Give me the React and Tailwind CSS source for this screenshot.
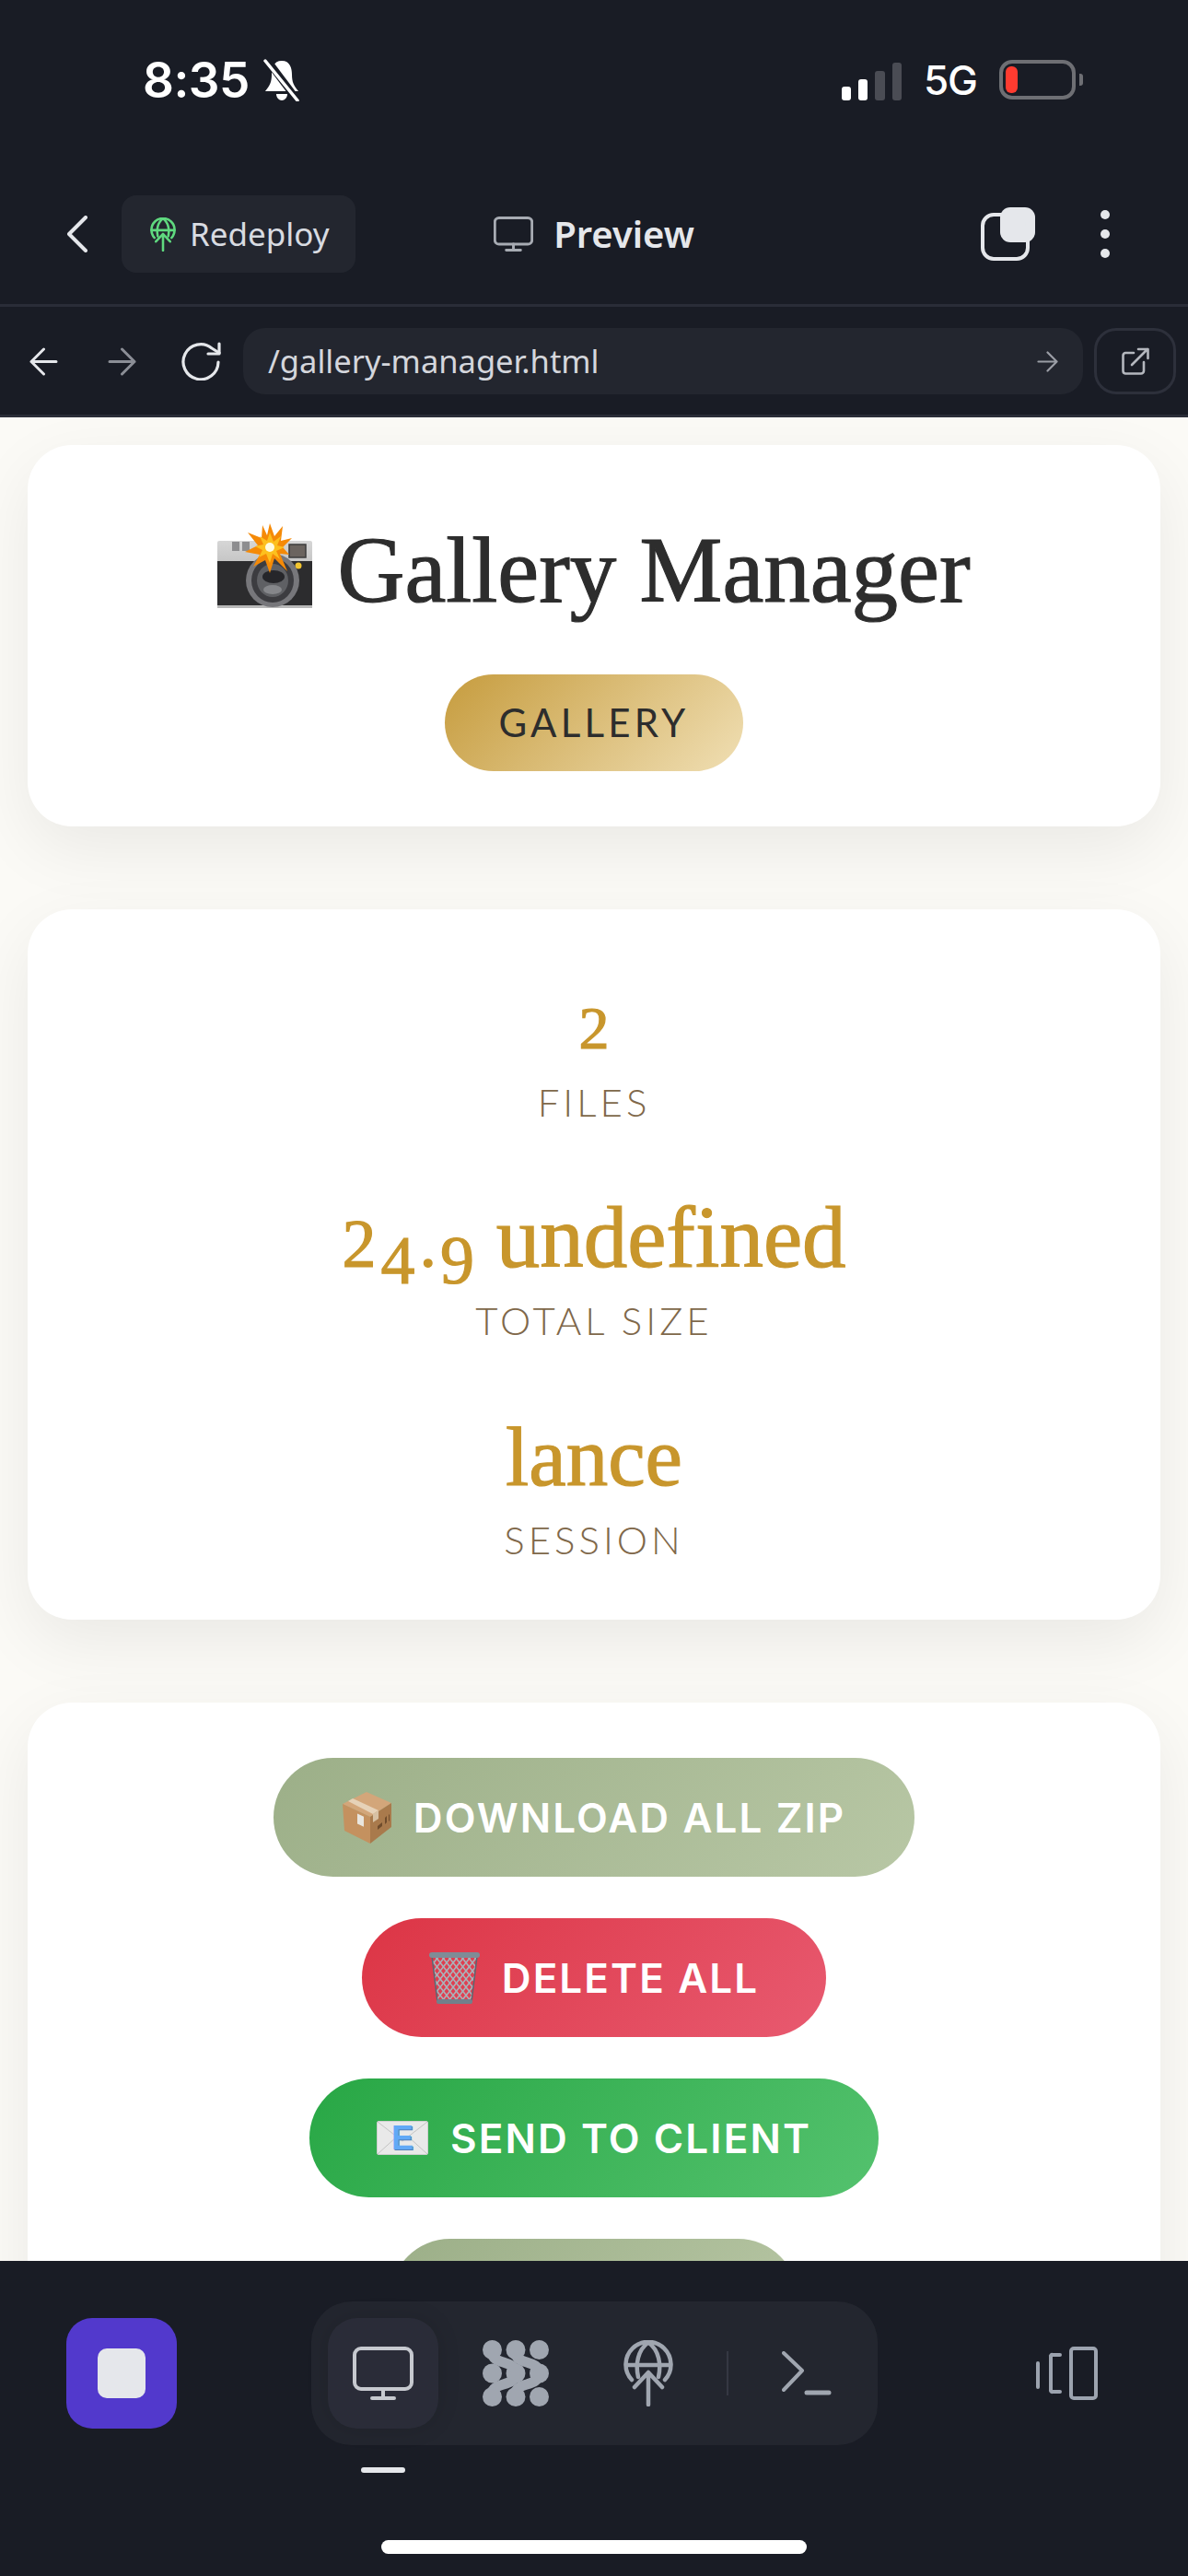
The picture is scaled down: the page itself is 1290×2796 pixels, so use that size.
const serif = "font-['Liberation_Serif',serif] [-webkit-text-stroke:1.2px_currentColor]";

function Monitor({ className, stroke = 4 }) {
  return (
    <svg viewBox="0 0 66 58" fill="none" stroke="currentColor" strokeWidth={stroke} strokeLinecap="round" className={className}>
      <rect x="2" y="2" width="62" height="44" rx="7" />
      <path d="M33 46V56M21 56H45" />
    </svg>
  );
}

function GlobeUp({ className, stroke = 4.5 }) {
  return (
    <svg viewBox="0 0 54 72" fill="none" stroke="currentColor" strokeWidth={stroke} strokeLinecap="round" strokeLinejoin="round" className={className}>
      <path d="M9 43A24.5 24.5 0 1 1 45 43" />
      <path d="M3 27H51" />
      <path d="M27 2.5C15 11 13 27 16 40" />
      <path d="M27 2.5C39 11 41 27 38 40" />
      <path d="M27 70V36M12 51L27 35L42 51" />
    </svg>
  );
}

function Blobs({ className }) {
  return (
    <svg viewBox="0 0 72 72" fill="currentColor" className={className}>
      {[[10.5, 10.5], [36, 10.5], [61.5, 10.5], [10.5, 36], [36, 36], [61.5, 36], [10.5, 61.5], [36, 61.5], [61.5, 61.5]].map(([x, y]) => (
        <circle key={`${x}-${y}`} cx={x} cy={y} r="10.5" />
      ))}
      <g fill="none" stroke="currentColor" strokeWidth="11">
        <path d="M10.5 14C10.5 27 36 21 36 36C36 51 10.5 45 10.5 58" />
        <path d="M36 14C36 27 61.5 21 61.5 36C61.5 51 36 45 36 58" />
      </g>
    </svg>
  );
}

function Arrow({ className, flip }) {
  return (
    <svg viewBox="0 0 31 31" fill="none" stroke="currentColor" strokeWidth="3" strokeLinecap="round" strokeLinejoin="round" className={className}>
      {flip ? <path d="M29 15.5H2M15.5 2L2 15.5L15.5 29" /> : <path d="M2 15.5H29M15.5 2L29 15.5L15.5 29" />}
    </svg>
  );
}

function CameraFlash() {
  return (
    <svg viewBox="0 0 103 92" className="w-[103px] h-[92px] shrink-0 mb-[10px]">
      <defs>
        <linearGradient id="plate" x1="0" y1="0" x2="0" y2="1">
          <stop offset="0" stopColor="#d6d6d6" />
          <stop offset="1" stopColor="#a2a2a2" />
        </linearGradient>
      </defs>
      <rect x="0" y="19" width="103" height="73" rx="2" fill="url(#plate)" />
      <rect x="0" y="41" width="103" height="48" fill="#2c2c2e" />
      <rect x="0" y="89" width="103" height="3" fill="#b8b8b8" />
      <rect x="16" y="20" width="8" height="10" fill="#8d8d8f" />
      <rect x="27" y="20" width="8" height="10" fill="#8d8d8f" />
      <rect x="78" y="23" width="18" height="14" fill="#6b645f" stroke="#3d3d3d" strokeWidth="1.5" />
      <circle cx="88" cy="46" r="3.5" fill="#f2c530" />
      <ellipse cx="60" cy="62" rx="29" ry="29" fill="#77777b" />
      <ellipse cx="60" cy="62" rx="23" ry="24" fill="#3c3c40" />
      <ellipse cx="60" cy="62" rx="17" ry="18" fill="#5f6064" />
      <ellipse cx="61" cy="58" rx="12" ry="7" fill="#26262a" />
      <ellipse cx="60" cy="72" rx="10" ry="5" fill="#85868a" />
      <path d="M57 0L62 14L71 3L69 19L81 16L71 26L78 34L68 33L76 52L62 38L57 54L52 40L39 47L46 34L30 31L44 24L33 10L48 16L49 2L54 13Z" fill="#f58a07" />
      <path d="M57 10L61 20L69 14L65 24L73 26L64 30L68 39L60 33L57 43L53 33L45 37L49 29L41 25L50 23L46 14L54 19Z" fill="#fdc01e" />
      <circle cx="57" cy="26" r="5" fill="#fffbe0" />
    </svg>
  );
}

function PackageBox() {
  return (
    <svg viewBox="0 0 53 56" className="w-[53px] h-[56px] shrink-0">
      <path d="M26 0L53 12L30 27L0 13Z" fill="#d3a67a" />
      <path d="M0 13L30 27V56L2 42Z" fill="#c4915f" />
      <path d="M30 27L53 12V38L30 56Z" fill="#a97a4c" />
      <path d="M11 7L39 20L33 24L6 10Z" fill="#e6d2b8" />
      <path d="M33 24L39 20V29L33 33Z" fill="#d7c1a4" />
      <rect x="16" y="24" width="7" height="11" fill="#e9e6df" transform="skewY(25) translate(0 -8)" />
      <path d="M38 41L43 37V33L38 37ZM46 35L48 33V26L46 28ZM50 32L51 31V24L50 25Z" fill="#6f4c2c" />
    </svg>
  );
}

function TrashBasket() {
  const lines = [];
  for (let i = -6; i < 11; i++) {
    lines.push(<path key={`a${i}`} d={`M${i * 7} 5L${i * 7 + 38} 53`} />);
    lines.push(<path key={`b${i}`} d={`M${i * 7 + 38} 5L${i * 7} 53`} />);
  }
  return (
    <svg viewBox="0 0 55 56" className="w-[55px] h-[56px] shrink-0">
      <defs>
        <clipPath id="basket">
          <path d="M3 4H52L46 54H9Z" />
        </clipPath>
      </defs>
      <g clipPath="url(#basket)" fill="none" stroke="#a9b3ba" strokeWidth="1.6">
        {lines}
      </g>
      <path d="M3 4L9 54M52 4L46 54" stroke="#5a6670" strokeWidth="1.5" fill="none" />
      <rect x="0" y="0" width="55" height="6" rx="3" fill="#7f8c96" />
      <rect x="8" y="51" width="39" height="5" rx="2" fill="#71808b" />
    </svg>
  );
}

function EMail() {
  return (
    <div className="relative w-[56px] h-[37px] shrink-0">
      <svg viewBox="0 0 56 37" className="w-[56px] h-[37px]">
        <rect x="0.5" y="0.5" width="55" height="36" rx="1.5" fill="#e9e9e9" stroke="#cfcfcf" />
        <path d="M1 1L28 22L55 1M1 36L22 17M55 36L34 17" fill="none" stroke="#c4c4c4" strokeWidth="1" />
      </svg>
      <span className="absolute inset-0 flex items-center justify-center font-['Liberation_Sans',sans-serif] font-bold text-[36px] leading-[37px] text-[#62a9f6] [text-shadow:1px_1px_0_#4f7fb8]">E</span>
    </div>
  );
}

function ActionButton({ emoji, label, gradient, pad }) {
  return (
    <button className={`flex items-center gap-[24px] h-[129px] rounded-full ${pad} ${gradient}`}>
      {emoji}
      <span className="font-['Inter',sans-serif] font-semibold text-[44px] tracking-[2.1px] text-white whitespace-nowrap">{label}</span>
    </button>
  );
}

function Label({ children, className = "" }) {
  return <div className={`font-['Lato',sans-serif] font-light text-[42px] leading-[50px] tracking-[4px] text-[#80684a] ${className}`}>{children}</div>;
}

const valueClass = `${serif} leading-[110px] text-[#c8962c] whitespace-nowrap`;
const oldStyle = "text-[74px] leading-[60px]";

export default function App() {
  return (
    <div className="w-[1290px] h-[2796px] flex flex-col overflow-hidden bg-[#fbfaf6]">
      <header className="shrink-0 bg-[#191c25] text-[#e5e7eb]">
        {/* status bar */}
        <div className="h-[190px] pt-[62px] pl-[155px] pr-[114px] flex justify-between items-start">
          <div className="flex items-center h-[50px] gap-[14px]">
            <span className="font-['Inter',sans-serif] font-semibold text-[53px] leading-[50px] text-white tracking-[-0.5px]">8:35</span>
            <svg viewBox="0 0 42 46" className="w-[42px] h-[46px] text-white">
              <path d="M21 2C12 2 10 10 10 17C10 25 8 29 3 35H39C34 29 32 25 32 17C32 10 30 2 21 2Z" fill="currentColor" />
              <path d="M15 38C15 42 18 45 21 45C24 45 27 42 27 38Z" fill="currentColor" />
              <path d="M5 1L38 45" stroke="#191c25" strokeWidth="8" />
              <path d="M3 2L38 45" stroke="currentColor" strokeWidth="3.5" strokeLinecap="round" />
            </svg>
          </div>
          <div className="flex items-start">
            <div className="flex items-end gap-[8px] h-[44px] mt-[3px]">
              <div className="w-[10px] h-[15px] rounded-[3px] bg-white" />
              <div className="w-[10px] h-[23px] rounded-[3px] bg-white" />
              <div className="w-[11px] h-[32px] rounded-[3px] bg-[#4a4c54]" />
              <div className="w-[10px] h-[41px] rounded-[3px] bg-[#4a4c54]" />
            </div>
            <span className="ml-[24px] mt-[2px] font-['Inter',sans-serif] font-medium text-[44px] leading-[46px] text-white tracking-[-1px]">5G</span>
            <div className="ml-[24px] mt-[3px] w-[83px] h-[43px] rounded-[14px] border-[4px] border-[#6e6f74] p-[3px]">
              <div className="w-[13px] h-full rounded-[6px] bg-[#ff3b30]" />
            </div>
            <div className="ml-[4px] mt-[18px] w-[4px] h-[13px] rounded-r-[3px] bg-[#6e6f74]" />
          </div>
        </div>

        {/* toolbar */}
        <div className="h-[140px] flex items-start pt-[22px]">
          <div className="flex-1 flex items-center h-[84px]">
            <svg viewBox="0 0 22 40" fill="none" stroke="currentColor" strokeWidth="4" strokeLinecap="round" strokeLinejoin="round" className="ml-[73px] w-[22px] h-[40px] shrink-0">
              <path d="M20 2L2 20L20 38" />
            </svg>
            <div className="ml-[37px] flex items-center w-[254px] h-[84px] pl-[31px] gap-[15px] rounded-[16px] bg-[#23262f]">
              <GlobeUp className="w-[28px] h-[37px] text-[#5fd97f]" stroke={5} />
              <span className="font-['Noto_Sans',sans-serif] text-[35px] leading-[40px] text-[#d8dbe1]">Redeploy</span>
            </div>
          </div>
          <div className="flex items-center h-[84px] gap-[22px]">
            <Monitor className="w-[43px] h-[40px] text-[#a7abb3]" stroke={4.5} />
            <span className="font-['Noto_Sans',sans-serif] font-semibold text-[40px] leading-[44px] text-[#e5e7eb]">Preview</span>
          </div>
          <div className="flex-1 flex items-center justify-end h-[84px] gap-[71px]">
            <div className="w-[59px] h-[58px] flex flex-col items-end">
              <div className="w-[38px] h-[38px] rounded-[11px] bg-[#e5e7eb]" />
              <div className="self-start -mt-[32px] w-[53px] h-[52px] rounded-[14px] border-[4px] border-[#e5e7eb]" />
            </div>
            <div className="mr-[85px] flex flex-col gap-[11px]">
              <div className="w-[10px] h-[10px] rounded-full bg-[#e5e7eb]" />
              <div className="w-[10px] h-[10px] rounded-full bg-[#e5e7eb]" />
              <div className="w-[10px] h-[10px] rounded-full bg-[#e5e7eb]" />
            </div>
          </div>
        </div>
        <div className="h-[3px] bg-[#2a2d38]" />

        {/* url row */}
        <div className="h-[117px] pt-[23px] flex items-start pl-[32px] pr-[13px]">
          <div className="h-[72px] flex items-center">
            <Arrow flip className="w-[31px] h-[31px] text-[#e5e7eb]" />
            <Arrow className="ml-[54px] w-[31px] h-[31px] text-[#8b8e96]" />
            <svg viewBox="0 0 44 42" fill="none" stroke="currentColor" strokeWidth="3.2" strokeLinecap="round" strokeLinejoin="round" className="ml-[48px] w-[44px] h-[42px] text-[#e5e7eb]">
              <path d="M41 22A19 19 0 1 1 34 7L42 12" />
              <path d="M42 2V13H30" />
            </svg>
          </div>
          <div className="ml-[24px] flex-1 h-[72px] rounded-[24px] bg-[#23262f] flex items-center justify-between pl-[27px] pr-[27px]">
            <span className="font-['Noto_Sans',sans-serif] text-[34.5px] text-[#d4d6dc]">/gallery-manager.html</span>
            <Arrow className="w-[23px] h-[25px] text-[#9a9da5]" />
          </div>
          <div className="ml-[12px] w-[89px] h-[72px] rounded-[24px] border-[3px] border-[#2d303b] flex items-center justify-center">
            <svg viewBox="0 0 30 30" fill="none" stroke="currentColor" strokeWidth="2.6" strokeLinecap="round" strokeLinejoin="round" className="w-[30px] h-[30px] text-[#b4b7be]">
              <path d="M13 6H4A3 3 0 0 0 1.5 9V25.5A3 3 0 0 0 4 28.5H21A3 3 0 0 0 24 25.5V16" />
              <path d="M11 19L28 2M18 2H28.5V12" />
            </svg>
          </div>
        </div>
        <div className="h-[3px] bg-[#2a2d38]" />
      </header>

      <main className="flex-1 min-h-0 overflow-hidden pt-[30px] px-[30px] flex flex-col gap-[90px]">
        {/* title card */}
        <section className="shrink-0 bg-white rounded-[48px] shadow-[0_24px_72px_rgba(0,0,0,0.07)] pt-[76px] pb-[60px] flex flex-col items-center">
          <div className="flex items-center gap-[27px] h-[120px]">
            <CameraFlash />
            <h1 className={`${serif} text-[101px] leading-[120px] text-[#2d2d2d] whitespace-nowrap`}>Gallery Manager</h1>
          </div>
          <div className="mt-[53px] h-[105px] px-[58px] rounded-full bg-[linear-gradient(135deg,#c69c3e,#f0dfb4)] flex items-center">
            <span className="font-['Lato',sans-serif] text-[42px] tracking-[4.2px] text-[#2d2d2d]">GALLERY</span>
          </div>
        </section>

        {/* stats card */}
        <section className="shrink-0 bg-white rounded-[48px] shadow-[0_24px_72px_rgba(0,0,0,0.07)] pt-[74px] pb-[62px] flex flex-col items-center gap-[67px] text-center">
          <div>
            <div className={`${valueClass} text-[66px]`}>2</div>
            <Label>FILES</Label>
          </div>
          <div>
            <div className={`${valueClass} text-[95px] pb-[10px]`}>
              <span className={`${oldStyle} tracking-[5px]`}>2</span>
              <span className={`${oldStyle} tracking-[5px] align-[-18px]`}>4</span>
              <span className={`${oldStyle} tracking-[4px]`}>.</span>
              <span className={`${oldStyle} align-[-18px]`}>9</span>
              {" undefined"}
            </div>
            <Label>TOTAL SIZE</Label>
          </div>
          <div className="mt-[2px]">
            <div className={`${valueClass} text-[91px]`}>lance</div>
            <Label className="mt-[9px]">SESSION</Label>
          </div>
        </section>

        {/* actions card */}
        <section className="shrink-0 bg-white rounded-[48px] shadow-[0_24px_72px_rgba(0,0,0,0.07)] pt-[60px] pb-[60px] flex flex-col items-center gap-[45px]">
          <ActionButton pad="px-[75px]" emoji={<PackageBox />} label="DOWNLOAD ALL ZIP" gradient="bg-[linear-gradient(135deg,#9caf88,#b8c7a5)]" />
          <ActionButton pad="px-[73px]" emoji={<TrashBasket />} label="DELETE ALL" gradient="bg-[linear-gradient(135deg,#dc3545,#e85a70)]" />
          <ActionButton pad="px-[73px]" emoji={<EMail />} label="SEND TO CLIENT" gradient="bg-[linear-gradient(135deg,#28a745,#54c26e)]" />
          <div className="w-[442px] h-[129px] rounded-full bg-[linear-gradient(135deg,#9caf88,#b8c7a5)]" />
        </section>
      </main>

      <footer className="shrink-0 h-[342px] bg-[#191c25] pt-[44px]">
        <div className="flex items-center">
          <button className="ml-[72px] w-[120px] h-[120px] rounded-[28px] bg-[#5239cc] flex items-center justify-center">
            <div className="w-[52px] h-[54px] rounded-[10px] bg-[#e5e7eb]" />
          </button>
          <div className="ml-[146px] w-[615px] h-[156px] rounded-[44px] bg-[#23262f] flex items-center pl-[18px] text-[#a0a6b0]">
            <div className="w-[120px] h-[120px] rounded-[32px] bg-[#2a2c38] shadow-[0_0_24px_rgba(0,0,0,0.12)] flex items-center justify-center">
              <Monitor className="w-[66px] h-[58px] text-[#c6c9cf]" />
            </div>
            <Blobs className="ml-[48px] w-[72px] h-[72px]" />
            <GlobeUp className="ml-[81px] w-[54px] h-[72px]" />
            <div className="ml-[58px] w-[2px] h-[48px] bg-[#353843]" />
            <svg viewBox="0 0 54 48" fill="none" stroke="currentColor" strokeWidth="4" strokeLinecap="round" strokeLinejoin="round" className="ml-[58px] w-[54px] h-[48px]">
              <path d="M2 2L22 21L2 42" />
              <path d="M27 45H51" strokeWidth="5" />
            </svg>
          </div>
          <svg viewBox="0 0 67 58" fill="none" stroke="currentColor" strokeWidth="4" strokeLinecap="round" strokeLinejoin="round" className="ml-[172px] w-[67px] h-[58px] text-[#9ca3af]">
            <rect x="38" y="2" width="27" height="54" rx="3" />
            <path d="M26 9H18A1.5 1.5 0 0 0 16 11V47A1.5 1.5 0 0 0 18 49H26" />
            <path d="M2 18V44" />
          </svg>
        </div>
        <div className="ml-[392px] mt-[24px] w-[48px] h-[6px] rounded-full bg-[#e5e7eb]" />
        <div className="mx-auto mt-[73px] w-[462px] h-[15px] rounded-full bg-white" />
      </footer>
    </div>
  );
}
